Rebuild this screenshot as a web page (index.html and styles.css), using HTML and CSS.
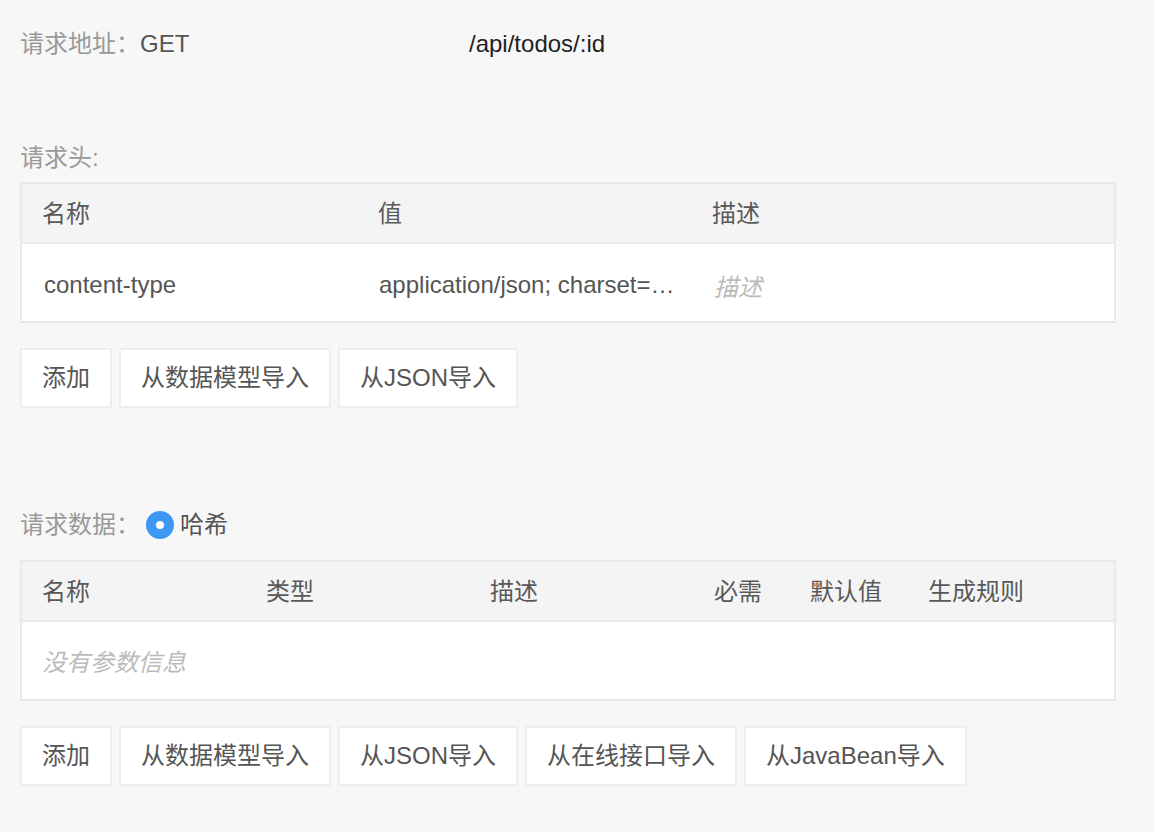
FILE: index.html
```html
<!DOCTYPE html>
<html lang="zh-CN">
<head>
<meta charset="utf-8">
<title>接口详情</title>
<link rel="stylesheet" href="styles.css">
</head>
<body>
<div class="page">
  <div class="url-row">
    <span class="label">请求地址：</span><span class="method">GET</span><span class="path">/api/todos/:id</span>
  </div>

  <div class="section-title headers-title"><span class="label">请求头:</span></div>
  <div class="table headers-table">
    <div class="thead row3">
      <div class="cell">名称</div>
      <div class="cell">值</div>
      <div class="cell">描述</div>
    </div>
    <div class="tbody row3 shift">
      <div class="cell val name-val">content-type</div>
      <div class="cell val value-val">application/json; charset=utf-8</div>
      <div class="cell placeholder desc-val">描述</div>
    </div>
  </div>
  <div class="btns">
    <button class="btn">添加</button>
    <button class="btn">从数据模型导入</button>
    <button class="btn">从JSON导入</button>
  </div>

  <div class="section-title data-title">
    <span class="label">请求数据：</span>
    <span class="radio"><span class="radio-dot"></span></span>
    <span class="radio-text">哈希</span>
  </div>
  <div class="table data-table">
    <div class="thead row6">
      <div class="cell">名称</div>
      <div class="cell">类型</div>
      <div class="cell">描述</div>
      <div class="cell">必需</div>
      <div class="cell">默认值</div>
      <div class="cell">生成规则</div>
    </div>
    <div class="tbody empty">
      <div class="cell placeholder">没有参数信息</div>
    </div>
  </div>
  <div class="btns">
    <button class="btn">添加</button>
    <button class="btn">从数据模型导入</button>
    <button class="btn">从JSON导入</button>
    <button class="btn">从在线接口导入</button>
    <button class="btn">从JavaBean导入</button>
  </div>
</div>
</body>
</html>
```

FILE: styles.css
```css
html, body {
  margin: 0;
  padding: 0;
  background: #f7f7f7;
}

body {
  font-family: "Liberation Sans", "Noto Sans CJK SC", sans-serif;
  font-size: 24px;
  color: #555;
  width: 1154px;
  height: 832px;
  overflow: hidden;
}

.page {
  padding: 26px 38px 0 20px;
}

.url-row {
  display: flex;
  align-items: center;
  height: 36px;
  line-height: 36px;
}

.label {
  color: #999;
}

.method {
  width: 329px;
  color: #555;
}

.path {
  color: #222;
}

.section-title {
  display: flex;
  align-items: center;
  height: 36px;
  line-height: 36px;
}

.headers-title {
  margin-top: 78px;
  margin-bottom: 6px;
}

.data-title {
  margin-top: 99px;
  margin-bottom: 17px;
}

.radio {
  width: 28px;
  height: 28px;
  border-radius: 50%;
  background: #3d98f4;
  display: flex;
  align-items: center;
  justify-content: center;
  margin-left: 6px;
  margin-right: 6px;
}

.radio-dot {
  width: 8px;
  height: 8px;
  border-radius: 50%;
  background: #fff;
}

.radio-text {
  color: #555;
}

.table {
  border: 2px solid #e9e9e9;
  background: #fff;
  width: 1092px;
}

.thead {
  background: #f4f4f4;
  box-sizing: border-box;
  height: 60px;
  padding-bottom: 4px;
  border-bottom: 2px solid #ececec;
  align-items: center;
  color: #595959;
}

.tbody {
  height: 77px;
  box-sizing: border-box;
  align-items: center;
}

.shift {
  padding-top: 5px;
}

.row3 {
  display: grid;
  grid-template-columns: 336px 334px 1fr;
}

.row6 {
  display: grid;
  grid-template-columns: 224px 224px 224px 96px 118px 1fr;
}

.cell {
  padding-left: 20px;
  white-space: nowrap;
  overflow: hidden;
  text-overflow: ellipsis;
}

.name-val {
  padding-left: 22px;
  color: #555;
}

.value-val {
  padding-left: 21px;
  padding-right: 14px;
  color: #555;
}

.desc-val {
  padding-left: 22px;
}

.placeholder {
  color: #bbb;
  font-style: italic;
}

.empty {
  display: flex;
  height: 77px;
}

.btns {
  display: flex;
  gap: 7px;
  margin-top: 25px;
}

.btn {
  height: 60px;
  padding: 0 20px;
  border: 2px solid #eeeeee;
  background: #fff;
  font-family: inherit;
  font-size: 24px;
  color: #555;
  line-height: 1;
  cursor: pointer;
}
```
